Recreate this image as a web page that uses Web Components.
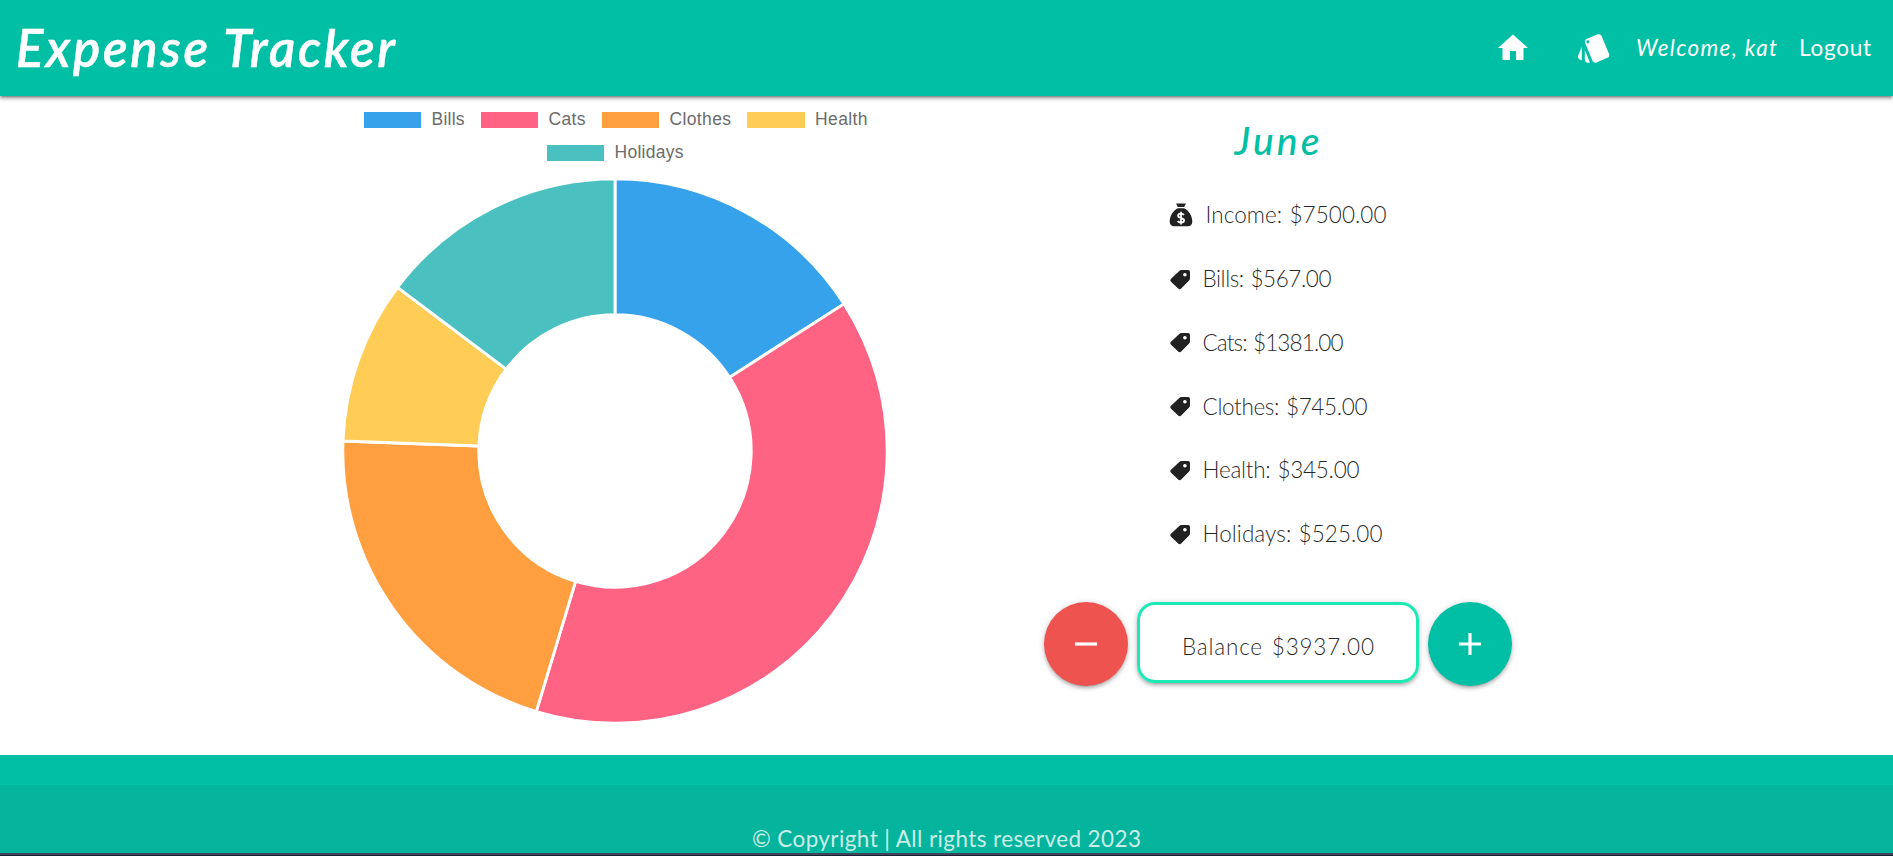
<!DOCTYPE html>
<html lang="en">
<head>
<meta charset="utf-8">
<title>Expense Tracker</title>
<style>
html,body{margin:0;height:100%;overflow:hidden;background:#fff}
body{font-family:Lato,"Open Sans",sans-serif;color:rgba(0,0,0,.87)}
</style>
</head>
<body>
<tracker-app></tracker-app>
<script>
const define = (name, html, setup) => customElements.define(name, class extends HTMLElement {
  connectedCallback() {
    if (this.shadowRoot) return;
    this.attachShadow({ mode: 'open' }).innerHTML = typeof html === 'function' ? html(this) : html;
    if (setup) setup(this, this.shadowRoot);
  }
});

/* A single line of text tracked out to the width given in its "width" attribute. */
define('fit-label', `<style>:host{display:block;flex:none;white-space:nowrap}span{display:inline-block}</style><span><slot></slot></span>`, (host, root) => {
  const target = +host.getAttribute('width');
  const span = root.querySelector('span');
  host.style.width = target + 'px';
  const n = host.textContent.length;
  span.style.letterSpacing = ((target - span.getBoundingClientRect().width) / (n - 1)) + 'px';
});

const ICONS = {
  home: 'M10 20v-6h4v6h5v-8h3L12 3 2 12h3v8z',
  style: 'M2.53 19.65l1.34.56v-9.03l-2.43 5.86c-.41 1.02.08 2.19 1.09 2.61zm19.5-3.7L17.07 3.98c-.31-.75-1.04-1.21-1.81-1.23-.26 0-.53.04-.79.15L7.1 5.95c-.75.31-1.21 1.03-1.23 1.8-.01.27.04.54.15.8l4.96 11.97c.31.76 1.05 1.22 1.83 1.23.26 0 .52-.05.77-.15l7.36-3.05c1.02-.42 1.51-1.59 1.09-2.6zM7.88 8.75c-.55 0-1-.45-1-1s.45-1 1-1 1 .45 1 1-.45 1-1 1zm-2 11c0 1.1.9 2 2 2h1.45l-3.45-8.34v6.34z',
  add: 'M19 13h-6v6h-2v-6H5v-2h6V5h2v6h6v2z',
  remove: 'M19 13H5v-2h14v2z',
  tag: 'M10 4.200Q11.100 3 12.600 3H19Q21 3 21 5V11.300Q21 12.500 20.100 13.400L12.200 21.400Q10.700 22.900 9.200 21.400L2 14.700Q.4 13.200 2 11.700ZM15.900 5.900A1.800 1.800 0 1 0 15.900 9.500 1.800 1.800 0 1 0 15.900 5.900Z'
};
const BAG = '<path d="M7 .6h10l-1.900 3.300H8.900zM9 5.200h6c4.400 1.600 8.300 7.600 8.300 13.300 0 3.200-1.700 4.800-4.500 4.800H5.200C2.400 23.300.7 21.700.7 18.500.7 12.800 4.600 6.800 9 5.200z"/><path fill="none" stroke="#fff" stroke-width="1.800" d="M15 12c-.7-1-1.700-1.400-3-1.400-1.800 0-2.900.9-2.900 2.200 0 3 6 1.500 6 4.500 0 1.400-1.200 2.300-3.100 2.300-1.500 0-2.600-.5-3.300-1.500M12 8.800v12.600"/>';
define('ui-icon', host => {
  const name = host.getAttribute('name');
  return `<style>:host{display:block;flex:none}svg{display:block;width:100%;height:100%}</style>
<svg viewBox="0 0 24 24" fill="currentColor">${name === 'bag' ? BAG : `<path fill-rule="evenodd" d="${ICONS[name]}"/>`}</svg>`;
});

define('app-header', `<style>
:host{display:block;position:relative;height:96px;background:#00bfa5;color:#fff;box-shadow:0 2px 2px rgba(0,0,0,.14),0 3px 1px -2px rgba(0,0,0,.12),0 1px 5px rgba(0,0,0,.2),0 3px 4px rgba(0,0,0,.16)}
nav{display:flex;align-items:center;height:96px;padding-left:16px;box-sizing:border-box}
.brand{font-size:51px;font-style:italic;font-weight:600;line-height:96px;-webkit-text-stroke:.5px #fff}
ui-icon{width:36px;height:36px}
.home{margin-left:auto;margin-right:45px}.cards{margin-right:24px}
.link{font-size:22.500px;line-height:30px}
.me{font-style:italic;margin-right:22px}.out{margin-right:22px}
</style><nav><fit-label class="brand" width="379">Expense Tracker</fit-label>
<ui-icon class="home" name="home"></ui-icon><ui-icon class="cards" name="style"></ui-icon>
<fit-label class="link me" width="141">Welcome, kat</fit-label><fit-label class="link out" width="72">Logout</fit-label></nav>`);

define('legend-item', host => `<style>:host{display:flex;height:33px;align-items:flex-start;color:#6c6c6c}
i{display:block;width:57.500px;height:15.500px;margin-right:10.500px;background:${host.getAttribute('color')}}
fit-label{font:17.500px/14px "Liberation Sans",Arial,sans-serif}</style>
<i></i><fit-label width="${host.getAttribute('width')}">${host.getAttribute('label')}</fit-label>`);

define('expense-chart', `<style>
:host{display:block;width:546px}
.row{display:flex;justify-content:center;gap:16px}
.first{margin-left:1px}
svg{display:block;width:546px;height:546px}
</style>
<div class="row first"><legend-item color="#36a2eb" width="33" label="Bills"></legend-item><legend-item color="#ff6384" width="37" label="Cats"></legend-item><legend-item color="#ff9f40" width="61.500" label="Clothes"></legend-item><legend-item color="#ffcd56" width="52.500" label="Health"></legend-item></div>
<div class="row"><legend-item color="#4bc0c0" width="69" label="Holidays"></legend-item></div>
<svg viewBox="-273 -273 546 546" stroke="#fff" stroke-width="2.900" stroke-linejoin="bevel"></svg>`, (host, root) => {
  const data = [[567, '#36a2eb'], [1381, '#ff6384'], [745, '#ff9f40'], [345, '#ffcd56'], [525, '#4bc0c0']];
  const total = data.reduce((s, d) => s + d[0], 0), R = 272.2, r = 136.2;
  const pt = (rad, a) => (rad * Math.sin(a)).toFixed(2) + ' ' + (-rad * Math.cos(a)).toFixed(2);
  let a = 0;
  root.querySelector('svg').innerHTML = data.map(([v, c]) => {
    const b = a + v / total * 2 * Math.PI, big = b - a > Math.PI ? 1 : 0;
    const d = `M${pt(R, a)}A${R} ${R} 0 ${big} 1 ${pt(R, b)}L${pt(r, b)}A${r} ${r} 0 ${big} 0 ${pt(r, a)}Z`;
    a = b;
    return `<path fill="${c}" d="${d}"/>`;
  }).join('');
});

define('expense-row', host => `<style>
:host{display:flex;align-items:center;height:63.750px;font-size:22.500px;font-weight:300;word-spacing:1px}
ui-icon{width:24px;height:24px;color:#212121;margin-right:9.500px}
:host([icon=bag]) ui-icon{margin-right:12.500px}
</style><ui-icon name="${host.getAttribute('icon')}"></ui-icon><slot></slot>`);

define('round-button', host => `<style>
:host{display:grid;place-items:center;flex:none;width:84px;height:84px;border-radius:50%;color:#fff;background:${host.getAttribute('color')};box-shadow:0 3px 3px rgba(0,0,0,.14),0 4px 1px -3px rgba(0,0,0,.12),0 1px 6px rgba(0,0,0,.2)}
ui-icon{width:38px;height:38px}
</style><ui-icon name="${host.getAttribute('icon')}"></ui-icon>`);

define('month-summary', `<style>
:host{display:flex;flex-direction:column;align-items:center;width:468px}
.month{font-size:39px;font-style:italic;font-weight:500;line-height:48px;color:#00bfa5;margin:20px 2px 0 0}
.list{width:218px;margin-top:19px}
.balance{display:flex;gap:9px;margin-top:36px}
.box{box-sizing:border-box;width:282px;height:81px;border:3px solid #1de9b6;border-radius:18px;display:flex;justify-content:center;padding-top:26px;font-size:22.500px;line-height:32px;font-weight:300;word-spacing:2px;box-shadow:0 3px 3px rgba(0,0,0,.14),0 4px 1px -3px rgba(0,0,0,.12),0 1px 6px rgba(0,0,0,.2)}
</style>
<fit-label class="month" width="85">June</fit-label>
<div class="list">
<expense-row icon="bag"><fit-label width="181">Income: $7500.00</fit-label></expense-row>
<expense-row icon="tag"><fit-label width="129">Bills: $567.00</fit-label></expense-row>
<expense-row icon="tag"><fit-label width="141">Cats: $1381.00</fit-label></expense-row>
<expense-row icon="tag"><fit-label width="165">Clothes: $745.00</fit-label></expense-row>
<expense-row icon="tag"><fit-label width="157">Health: $345.00</fit-label></expense-row>
<expense-row icon="tag"><fit-label width="180">Holidays: $525.00</fit-label></expense-row>
</div>
<div class="balance"><round-button icon="remove" color="#ef5350"></round-button><div class="box"><fit-label width="192">Balance $3937.00</fit-label></div><round-button icon="add" color="#00bfa5"></round-button></div>`);

define('app-footer', `<style>
:host{display:flex;flex-direction:column;flex:none;height:101px;background:#00bfa5}
.copy{flex:1;margin-top:30px;display:flex;justify-content:center;align-items:flex-end;background:rgba(51,51,51,.08);color:rgba(255,255,255,.8);font-size:22.500px;line-height:28px}
.edge{height:1px;background:#1c2038;border-top:2px solid #41455a}
</style><div class="copy"><fit-label width="389">© Copyright | All rights reserved 2023</fit-label></div><div class="edge"></div>`);

define('tracker-app', `<style>
:host{display:flex;flex-direction:column;height:856px}
main{flex:1;min-height:0;display:flex;align-items:flex-start;padding-left:342px;gap:156px}
expense-chart{margin-top:16px}
</style><app-header></app-header><main><expense-chart></expense-chart><month-summary></month-summary></main><app-footer></app-footer>`);
</script>
</body>
</html>
